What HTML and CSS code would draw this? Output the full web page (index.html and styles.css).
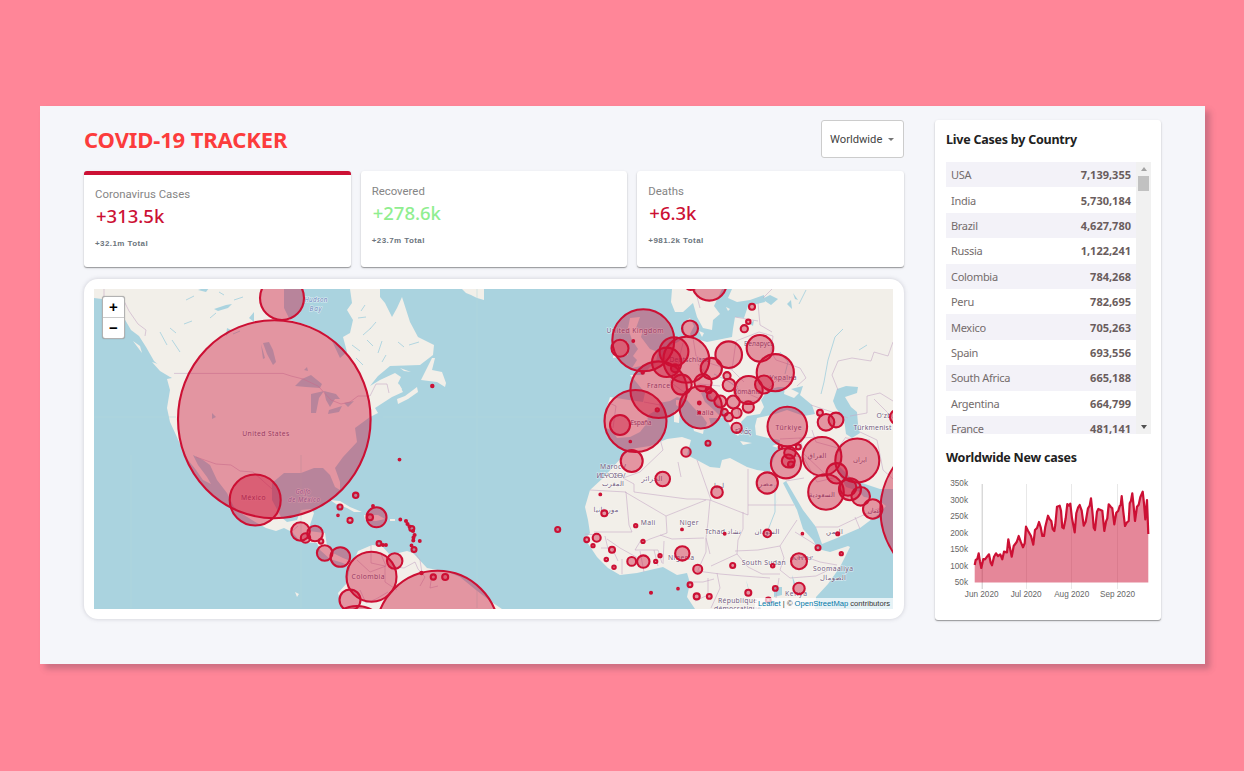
FILE: index.html
```html
<!DOCTYPE html>
<html lang="en">
<head>
<meta charset="utf-8">
<title>COVID-19 Tracker</title>
<link rel="stylesheet" href="styles.css">
</head>
<body>
<div class="app">
  <main class="app-left">
    <header class="app-header">
      <h1 class="app-title">COVID-19 TRACKER</h1>
      <button class="dropdown" type="button"><span>Worldwide</span><i class="caret"></i></button>
    </header>
    <section class="stats">
      <article class="card stat stat-selected">
        <p class="stat-label">Coronavirus Cases</p>
        <h2 class="stat-value">+313.5k</h2>
        <p class="stat-total">+32.1m Total</p>
      </article>
      <article class="card stat">
        <p class="stat-label">Recovered</p>
        <h2 class="stat-value stat-green">+278.6k</h2>
        <p class="stat-total">+23.7m Total</p>
      </article>
      <article class="card stat">
        <p class="stat-label">Deaths</p>
        <h2 class="stat-value">+6.3k</h2>
        <p class="stat-total">+981.2k Total</p>
      </article>
    </section>
    <section class="map-card">
      <div class="map">
        <svg class="map-svg" viewBox="94 289 799 319.5" preserveAspectRatio="none">
          <g class="land">
            <path d="M94 289V298L102 299L112 306L120 312L124 318L131 330L139 336L146 347L154 361L163 369L172 378L167 379L170 390L167 408L170 422L176 435L180 444L184 451L188 460L196 470L203 480L211 484L207 477L198 465L193 455L203 460L210 465L217 480L227 493L234 507L244 515L257 523L266 528L276 531L284 528L292 532L301 542L317 543L320 550L330 559L343 563L350 567L347 583L338 593L340 600L342 609H502L493 603L476 590L460 577L448 572L427 568L413 553L407 551L390 555L382 546L372 545L358 551L353 562L343 558L333 553L327 546L325 533L308 531L314 513L311 509L301 510L297 520L287 522L281 517L272 500V483L284 473L301 473L314 468L323 468L330 475L335 487L340 490V482L335 468L343 457L357 442L355 428L370 417L378 413L375 408L392 397L403 392L398 383L401 377L395 373L380 380L370 386L378 376L390 366L420 365L433 355L434 345L418 337L410 322L402 297L397 308L392 317L385 303L380 297V289H350L352 303L347 310L353 320L350 333L343 337L347 352L340 358L333 343L330 337L310 326L290 320L284 308V289Z"/>
            <path d="M397 399L405 396L417 387L418 392L408 399L398 404ZM432 358L421 380L437 382L445 387L446 383L442 372L432 370L435 358ZM400 368L411 372L404 371ZM462 289L466 293L471 295L477 298L484 300V289ZM133 341L142 353L140 346ZM152 362L164 366L174 378L170 377L160 371Z"/>
            <path d="M330 500L340 501L350 507L362 512L354 512L347 508L336 504ZM364 515H378L385 519L376 521L365 520ZM390 519H395V521H390ZM346 519H353V521H346ZM346 491L349 497ZM295 592L299 594L297 597ZM396 389L399 384L402 389L398 394Z"/>
            <path d="M630 318L640 317L636 328L643 330L641 337L650 349L658 352L656 361L645 365L632 368L637 360L633 356L638 349L632 340L628 328ZM617 340L628 342V355L613 358L614 345Z"/>
            <path d="M672 289L671 302L675 312L683 312L693 303L697 317L703 328L712 330L713 320L720 314L714 306L722 289ZM732 289L728 298L737 302L750 300L764 295L765 302L748 306L744 318L735 317L733 329L732 337L717 340L707 342L693 338L690 334L694 326L690 318L683 323L685 337L678 342L668 347L663 358L650 367L643 375L630 375L637 383L645 393L643 402L629 400L610 397L606 410L605 428L612 430L617 438L630 437L640 432L647 423L648 415L660 408L659 403L670 401L677 397L687 400L693 407L703 417L707 423L704 430L711 425L709 418L722 418L715 411L705 402L701 393L708 391L713 400L723 408L727 420L732 430L738 436L743 428L741 422L747 416L760 414L764 407L761 400L768 390L778 387L785 387L784 394L794 398L799 393L791 389L803 386L800 395L812 405L815 414L804 416L787 410L775 414L757 418L755 426L756 435L768 438L780 440L779 447L773 460L770 472L757 470L747 467L730 458L722 460L720 468L710 467L697 460L687 455L691 440L682 437L667 439L650 446L630 449L622 457L613 467L603 478L590 490L585 507L588 520L590 533L585 539L597 557L608 568L620 575L637 573L663 567L677 575L687 573L690 583L687 597L695 609H815L816 597L828 584L840 567L850 547L848 546L830 552L818 549L813 540L803 529L797 510L783 483L786 481L803 510L816 527L822 544L837 538L860 528L880 513L886 506L877 499L864 497L858 491L846 487L837 470L840 467L853 480L880 489H893V289Z"/>
            <path d="M693 427L704 428L703 434L694 431ZM674 411L680 410L679 423L674 422ZM676 400L679 400V407L676 405ZM740 441L752 443L743 445ZM772 446L781 443L778 448ZM699 331L704 333L702 337ZM726 307L730 309L728 311Z"/>
          </g>
          <g class="water">
            <path d="M837 389L846 386L858 387L857 393L845 397L851 407L857 412L858 424L860 433L852 438L846 434L844 419L836 408L833 401ZM263 343L269 342L273 350L276 362L273 365L267 354ZM261 344L265 358L263 359ZM295 386L302 379L311 375L322 384L320 388L306 387ZM311 394L324 391L319 398L316 413L311 413ZM324 391L336 394L340 399L335 399L330 407L326 400ZM329 410L342 406L339 412L328 414ZM344 403L354 401L348 407ZM198 290L204 288H209L206 292ZM214 309L226 305L232 304L228 308L218 311ZM249 318L254 312V322ZM227 328L231 330L226 336ZM212 413L216 417L212 419ZM304 370L307 367L308 371ZM774 587H782L782 595L774 597ZM746 580L748 586 749 592ZM792 575L795 583 794 588ZM762 299L770 295 778 299 771 305ZM787 304L791 300 792 309ZM750 324L754 320 753 326ZM776 503L779 496 775 505ZM793 293L798 300 795 299Z"/>
            <path class="river" d="M170 328L176 333M160 332L167 345M172 340L180 352M186 300L194 296M192 321L184 324M210 318L216 313M234 300L243 297M219 292L224 295M240 331L233 334M352 345L360 351M367 340L373 346M382 341L378 353M398 342L404 347M356 358L363 365M365 305L361 311M376 322L370 329M409 345L419 342M363 335L371 328M386 355L382 362M358 318L366 317M843 329L835 337L828 360L824 382L821 394M806 290L799 304M867 345L859 350M714 374L724 379 738 387M780 352L788 362 785 374M775 485V512L768 530"/>
          </g>
          <g class="borders">
            <path d="M104 289L104 300L124 301L129 311L138 324L146 330L145 336M174 373.4H283L291 376L303 379L318 386L331 400L341 404L350 402L358 396H370L376 384H387L389 393M196 457L216 464L231 465L240 471L253 472L262 480L272 489M357 560L370 572L386 566L380 552M371 545V563L385 566V582L397 590M395 567L404 568L415 562L418 569L425 577L420 586M432 574L430 588 438 586M360 590L366 603 376 599 388 592M415 553L420 560L422 573M290 533L298 526"/>
            <path d="M609 403L616 406L613 428M644 402L660 405M664 357L674 370L670 382M683 343L680 355L678 365M693 338L696 356L712 364M698 364L710 378M712 364L732 370L736 341M732 370L744 382M670 382L684 392 700 384 720 386M726 379L738 389L760 399M741 401L760 401M724 404L738 409L740 419M736 341L759 332L773 336L771 352L776 360L800 368L806 378L797 386M758 303L760 325L772 332M735 317L758 321M695 289L700 308M772 289L763 298M766 391L777 380 790 382M811 405L832 412L848 418M812 430L816 442L838 448L846 437M780 439L800 438 818 437M800 438L804 454L826 475M790 455L804 458M787 465L797 465M838 390L832 375L838 361L852 358L871 361L874 352L888 356L893 342M867 413V396L880 393L893 401M867 413L850 416M860 432L877 440L883 470L893 479M874 399L893 418M846 438L870 440"/>
            <path d="M623 478L634 484V492L687 499L699 499L710 500L748 515V469M748 505H794M590 490L626 492L629 525L632 532H594M625 492L666 516L667 533L650 539L642 543M711 500L697 460M666 516L706 500M743 512V529L738 540L737 554L711 566M710 500L708 522L706 538 710 554M660 535L672 539 704 538M607 539L620 548L638 558M641 540L635 550H658L662 563M585 534L598 535M654 550L658 566M664 541L663 564M706 538L706 552L698 570M735 551L758 550L780 546L789 532L797 520M737 554L748 567L762 574H780M780 546L784 558L780 570L790 578L816 576L835 567M697 571L720 574L743 576L770 578M688 582L703 582L714 579M708 578V595L695 601M717 573L720 588 711 608M779 578L776 598M803 556L820 562 837 565M819 547L808 540 795 532M622 559L622 574M640 551L644 572M816 527H838L859 517L880 508M855 517L860 529M804 458L817 482 837 477M786 481L804 478M605 536L608 549M601 548L612 548 618 561M678 462L681 477M660 439L663 450 640 472 623 478"/>
          </g>
          <path class="graticule" d="M131 455V608M301 455V608M94 417H176M477 289V608M383 417H605"/>
          <g class="labels" id="labels"></g>
          <g class="cases" id="cases"></g>
        </svg>
        <div class="zoom-control"><button type="button">+</button><button type="button">−</button></div>
        <div class="attribution"><a>Leaflet</a> | © <a>OpenStreetMap</a> contributors</div>
      </div>
    </section>
  </main>
  <aside class="card app-right">
    <h3 class="side-title">Live Cases by Country</h3>
    <div class="table-wrap">
      <table class="table">
        <tbody>
          <tr><td>USA</td><td><strong>7,139,355</strong></td></tr>
          <tr><td>India</td><td><strong>5,730,184</strong></td></tr>
          <tr><td>Brazil</td><td><strong>4,627,780</strong></td></tr>
          <tr><td>Russia</td><td><strong>1,122,241</strong></td></tr>
          <tr><td>Colombia</td><td><strong>784,268</strong></td></tr>
          <tr><td>Peru</td><td><strong>782,695</strong></td></tr>
          <tr><td>Mexico</td><td><strong>705,263</strong></td></tr>
          <tr><td>Spain</td><td><strong>693,556</strong></td></tr>
          <tr><td>South Africa</td><td><strong>665,188</strong></td></tr>
          <tr><td>Argentina</td><td><strong>664,799</strong></td></tr>
          <tr><td>France</td><td><strong>481,141</strong></td></tr>
        </tbody>
      </table>
      <div class="scrollbar"><i class="arrow-up"></i><i class="thumb"></i><i class="arrow-down"></i></div>
    </div>
    <h3 class="side-title chart-title">Worldwide New cases</h3>
    <svg class="chart" viewBox="946 475 206 130">
      <g class="grid">
        <path class="axis" d="M982.2 484V589"/>
        <path d="M1026.5 484V589M1071.5 484V589M1117.5 484V589"/>
      </g>
      <path class="area" id="area"/>
      <path class="line" id="line"/>
      <g class="tick tick-y">
        <text x="968" y="486">350k</text><text x="968" y="503">300k</text><text x="968" y="519.4">250k</text><text x="968" y="535.8">200k</text><text x="968" y="552">150k</text><text x="968" y="568.5">100k</text><text x="968" y="584.5">50k</text>
      </g>
      <g class="tick tick-x">
        <text x="981.7" y="597">Jun 2020</text><text x="1026.2" y="597">Jul 2020</text><text x="1071.7" y="597">Aug 2020</text><text x="1117.5" y="597">Sep 2020</text>
      </g>
    </svg>
  </aside>
</div>
<script src="app.js"></script>
</body>
</html>
```
FILE: styles.css
```css
* { box-sizing: border-box; margin: 0; padding: 0; }

body {
  min-height: 771px;
  padding: 106px 39px 107px 40px;
  background: #ff8698;
  font-family: "Noto Sans", "Open Sans", sans-serif;
  overflow: hidden;
}

.app {
  display: flex;
  gap: 31px;
  width: 1165px;
  height: 558px;
  padding: 14px 44px 44px;
  background: #f5f6fa;
  box-shadow: 5px 5px 6px rgba(90, 60, 80, 0.3);
}

.app-left { width: 820px; }

.card {
  background: #fff;
  border-radius: 3px;
  box-shadow: 0 1px 1px rgba(0, 0, 0, 0.32), 0 1px 3px rgba(0, 0, 0, 0.12);
}

.app-header {
  display: flex;
  justify-content: space-between;
  align-items: center;
  height: 38px;
  margin-bottom: 13px;
}

.app-title {
  color: #fc3c3c;
  font-size: 22px;
  font-weight: 700;
  line-height: 38px;
  letter-spacing: -0.12px;
}

.dropdown {
  display: flex;
  align-items: center;
  justify-content: space-between;
  width: 83px;
  height: 38px;
  padding: 0 9px 0 8px;
  border: 1px solid #ccc;
  border-radius: 3px;
  background: #fff;
  color: #444;
  font: 11.2px Roboto, sans-serif;
}

.caret {
  border: 3.5px solid transparent;
  border-top: 3.5px solid #757575;
  border-bottom: 0;
}

.stats { display: flex; gap: 10px; height: 96px; margin-bottom: 12px; }
.stat { flex: 1; padding: 12px 11px 11px; }
.stat-selected { border-top: 4px solid #cc1034; padding-top: 11px; }

.stat-label {
  color: #858585;
  font: 11.4px/17px Roboto, sans-serif;
}

.stat-value {
  margin: 1px 0 0 1px;
  color: #cc1034;
  font-size: 18.5px;
  font-weight: 500;
  line-height: 24px;
}

.stat-green { color: #90ee90; }

.stat-total {
  margin-top: 9px;
  color: #6c757d;
  font: 700 8px/14px "Liberation Sans", sans-serif;
  letter-spacing: 0.42px;
}

.map-card {
  height: 340px;
  padding: 10px 11px 10px 10px;
  background: #fff;
  border-radius: 14px;
  box-shadow: 0 0 4px rgba(80, 80, 100, 0.25);
}

.map { position: relative; height: 319.5px; background: #aad3df; overflow: hidden; }
.map-svg { display: block; width: 100%; height: 100%; }

.land { fill: #f2efe9; }
.water { fill: #aad3df; }
.river { fill: none; stroke: #aad3df; stroke-width: 0.9; }
.borders { fill: none; stroke: #c6a9c6; stroke-width: 0.6; }
.graticule { fill: none; stroke: #b3d5d8; stroke-width: 0.5; }

.labels {
  fill: #735c80;
  font: 6.8px "Noto Sans", "DejaVu Sans", sans-serif;
  text-anchor: middle;
  stroke: rgba(255, 255, 255, 0.6);
  stroke-width: 1.2px;
  paint-order: stroke;
}

.labels .sea { fill: #6f88bd; font-style: italic; font-size: 6.3px; }
.cases { fill: #cc1034; fill-opacity: 0.4; stroke: #cc1034; stroke-width: 2.1; }

.zoom-control {
  position: absolute;
  top: 7px;
  left: 8px;
  width: 23px;
  height: 43px;
  border: 1px solid rgba(0, 0, 0, 0.3);
  border-radius: 3px;
  background: #fff;
  box-shadow: 0 0 1px rgba(0, 0, 0, 0.35);
}

.zoom-control button {
  display: block;
  width: 100%;
  height: 20.5px;
  border: 0;
  background: none;
  color: #000;
  font: 700 15px/20px "Liberation Sans", sans-serif;
}

.zoom-control button:first-child { border-bottom: 1px solid #ccc; }

.attribution {
  position: absolute;
  right: 0;
  bottom: 0;
  padding: 0 3px;
  background: rgba(255, 255, 255, 0.7);
  color: #333;
  font: 7.6px/11px "Liberation Sans", sans-serif;
  white-space: nowrap;
}

.attribution a { color: #0078a8; }

.app-right { width: 226px; height: 500px; padding: 10px 10px 0 11px; }

.side-title {
  color: #212121;
  font-size: 12.5px;
  font-weight: 700;
  line-height: 20px;
  letter-spacing: -0.23px;
}

.table-wrap {
  display: flex;
  height: 272px;
  margin-top: 12px;
  overflow: hidden;
}

.table { width: 190px; border-collapse: collapse; align-self: flex-start; }

.table tr { height: 25.4px; }
.table tr:nth-child(odd) { background: #f3f2f8; }

.table td {
  height: 25.4px;
  padding: 0 5px;
  color: #6a5d5d;
  font-size: 11px;
  line-height: 25px;
}

.table td:first-child { color: #746c6c; letter-spacing: -0.3px; }
.table td:last-child { text-align: right; }

.scrollbar {
  display: flex;
  flex-direction: column;
  align-items: center;
  width: 15px;
  background: #f1f1f1;
}

.arrow-up {
  margin: 5px 0 5px;
  border: 3.5px solid transparent;
  border-top: 0;
  border-bottom: 4px solid #a3a3a3;
}

.thumb { width: 11px; height: 14.5px; background: #c1c1c1; }

.arrow-down {
  margin: auto 0 5px;
  border: 3.5px solid transparent;
  border-bottom: 0;
  border-top: 4px solid #505050;
}

.chart-title { margin-top: 14px; }
.chart { display: block; width: 206px; height: 130px; margin-top: 7px; }
.grid path { stroke: #e2e2e2; stroke-width: 0.8; }
.grid .axis { stroke: #c8c8c8; stroke-width: 1; }
.area { fill: #cc1034; fill-opacity: 0.5; }
.line { fill: none; stroke: #cc1034; stroke-width: 2.2; stroke-linejoin: round; }
.tick { fill: #666; font: 8.2px "Liberation Sans", sans-serif; }
.tick-y { text-anchor: end; }
.tick-x { text-anchor: middle; }
```
FILE: app.js
```js
const SVG = "http://www.w3.org/2000/svg";

// Case circles: x, y, radius, and a vertical radius where it differs
const cases = [
  [274.3,419.2,96.3,99],[255.2,500,25.5],[282,298,22],[437.5,632,61.3],[371.5,576.7,25],[350,600,10.5],[357,636,30],
  [394.7,561,7.7],[324.7,553,7.8],[340.3,557,9.8],[315,533.5,7.8],[300.5,531.5,9.3],[305.5,538,4.7],[321,541.3,2.3],
  [376.5,517.3,10],[370,517.3,3],[340,507,2.5],[355.7,495.3,2.7],[338,515.3,.8],[350,520.3,2.6],[373,506,.9],[399.5,459.6,.9],
  [400.3,519.5,.9],[406,521,1],[407.5,524,1],[409.5,526.5,1],[411.8,528.6,2.5],[413,531,1],[414.6,535,1],[413.5,537.5,1],
  [413.3,540.5,1],[419.8,541,.9],[411.5,545.4,.9],[414,549.6,2.5],[379,543.5,2.4],[383,545,1],[386,545,.9],
  [432.3,386,1.2],[557.7,529.5,2.5],[421.5,573,1.2],[433.3,577,2.6],[445.2,577,3],
  [643.3,340.3,31],[620,348.3,8.5],[633.3,341,.9],[642.7,372.5,1.2],[658.7,389.7,28.3],[635.5,421,31],[620,425,10],
  [674,351.7,14.4],[666.7,362.3,14.7],[675,368.3,4],[686.3,359.7,23],[690,328.5,8],[709.3,283.3,17.3],[690.7,284,6],
  [752,306.8,3],[748.3,321.8,2.2],[744.3,328.7,3.6],[760,348.3,13.3],[728.7,354.7,13.3],[775.3,372.7,18.6],
  [711.3,368.5,10.6],[727,375.7,3.6],[729,385,6.3],[703,382.7,8.6],[681.7,384.6,10],[708.7,390.3,3],[712,395.7,5],
  [720.3,401.5,6],[733.3,402,6.5],[748.7,390,14],[764,384.5,9],[748.3,407,5.6],[724.5,412.3,3.4],[728.7,417,4.2],
  [736.6,413,5],[736.6,427.8,5.1],[700.7,407.3,21.2],[699.3,403,1.4],[699.3,412.7,.8],[657.3,409.8,1.6],[630.3,441.5,.8],
  [708,443.3,2.5],[686,452,4.7],[631.7,461,11],[662.7,479,7.3],[717,492.2,5.8],[767.3,483,10.6],[787.3,426.5,19.8],
  [820,412.7,2.9],[826,422.3,8.3],[836,420,7.4],[780.5,447,1.8],[798.3,446.9,2.5],[790,452.8,5.8],[786,463.3,15.1],
  [788.3,461,6.5],[791,464.5,3],[822,456.4,19.4],[857.3,460.5,22],[836.7,473.3,10.2],[826,492,17.8],[850,489.3,11],
  [848,487.5,8.3],[860.7,496.3,9.3],[872.7,509,9.7],[837.7,533.7,1.5],[957,510,76.6],[897,417,7],
  [600.3,494.4,.9],[604.3,513.2,3],[635.7,525.7,1.6],[682,529.4,.9],[724.7,533.7,.9],[767.3,533.4,3.8],[802.4,533.7,.8],
  [818,547.7,2.5],[841.3,553.7,1.6],[799,561.2,8],[799,588.4,5.7],[775.3,588.4,2.4],[768.3,600,2.4],[772.7,565.8,1.7],
  [732.7,565.5,2.5],[748.3,592.7,3],[697.7,569.2,4.5],[682.3,553.4,7.2],[690,584.8,2.4],[678,588.7,.8],[651,592.7,1],
  [696.7,596.4,3],[709.3,596.4,2.4],[660,555.7,1.6],[655.7,561.4,1.6],[643.3,561.6,6.2],[631.7,561.4,4.4],[614,567.2,1.7],
  [606.3,559.4,1.7],[612,549.7,3],[643,541.4,1.6],[596.7,537.8,4],[586.7,539.7,2.4],[593,545.7,1.6]
];

// Place names: x, baseline, width, text
const places = [
  [265.8,436,47,"United States"],[253.3,499.6,24.5,"México"],[368,578.8,33,"Colombia"],[635,333,57,"United Kingdom"],
  [658.5,387.6,23,"France"],[641,425,21,"España"],[690,362,41,"Deutschland"],[759,346,30,"Беларусь"],
  [783,379.6,27,"Україна"],[747,393.8,28,"România"],[705,415,17,"Italia"],[743,434.3,16,"Ελλάς"],[788.5,430,26,"Türkiye"],
  [884,417.5,15,"Oʻzb"],[872.5,430,38,"Türkmenist"],[613,469,26,"Maroc /"],[611,477.5,29,"ⵍⵎⵖⵔⵉⴱ /"],[613,486,22,"المغرب"],
  [652,480.5,21,"الجزائر"],[719,488,10,"ليبيا"],[766,486,14,"مصر"],[817,458,19,"العراق"],[860,461.5,14,"ایران"],
  [822,497,26,"السعودية"],[874,513,13,"عمان"],[834.5,534,17,"اليمن"],[606,511.5,25,"موريتانيا"],
  [648,525,14.5,"Mali"],[689,525,19,"Niger"],[723,533.8,36,"Tchad تشاد"],[767,534,25,"السودان"],
  [681,560,26,"Nigeria"],[763.7,564.5,44,"South Sudan"],[802,559.5,21,"ኢትዮጵያ"],[833,571,40,"Soomaaliya"],
  [833,579.5,26,"الصومال"],[796,596,22,"Kenya"],[737.5,603,39,"République"],[737.5,611,47,"démocratique"],
  [316,302,23,"Hudson","sea"],[315.5,310.5,12,"Bay","sea"],[303,493.5,15,"Golfo","sea"],[304,502,32,"de México","sea"]
];

function add(parent, tag, attrs, text) {
  const node = document.createElementNS(SVG, tag);
  for (const key in attrs) node.setAttribute(key, attrs[key]);
  if (text) node.textContent = text;
  document.getElementById(parent).appendChild(node);
}

cases.forEach(([cx, cy, rx, ry]) => add("cases", "ellipse", { cx, cy, rx, ry: ry || rx }));
places.forEach(([x, y, textLength, text, type]) =>
  add("labels", "text", { x, y, textLength, class: type || "place" }, text));

// Daily new cases, sampled in thirds of a pixel from the chart's corner
const daily = [149,375,152,360,157,357,161,340,165,365,169,384,175,357,180,358,186,350,192,343,197,368,201,376,207,350,213,340,219,348,226,343,232,358,237,335,246,337,250,298,255,325,260,350,266,318,275,306,281,288,287,305,294,322,299,310,303,260,309,272,318,288,325,314,330,270,336,264,342,246,347,262,352,288,357,288,361,260,369,227,374,238,379,243,383,267,388,273,391,255,396,200,404,197,408,212,412,262,416,265,422,235,427,192,432,197,436,191,441,235,449,277,454,220,459,203,464,195,470,212,476,257,482,245,489,205,494,197,498,175,503,225,506,263,510,270,516,215,520,207,532,212,538,273,543,245,547,235,551,193,557,200,562,205,568,253,574,218,580,212,584,198,587,195,590,168,595,215,600,258,606,247,611,243,614,190,618,182,622,160,626,200,630,243,636,200,641,194,646,172,653,155,657,190,661,238,666,180,670,282];
const points = [];
for (let i = 0; i < daily.length; i += 2) {
  points.push((925 + daily[i] / 3).toFixed(1) + " " + (440 + daily[i + 1] / 3).toFixed(1));
}
const trace = "M" + points.join("L");
document.getElementById("line").setAttribute("d", trace);
document.getElementById("area").setAttribute("d", trace + "V582.5H974.7Z");
```
